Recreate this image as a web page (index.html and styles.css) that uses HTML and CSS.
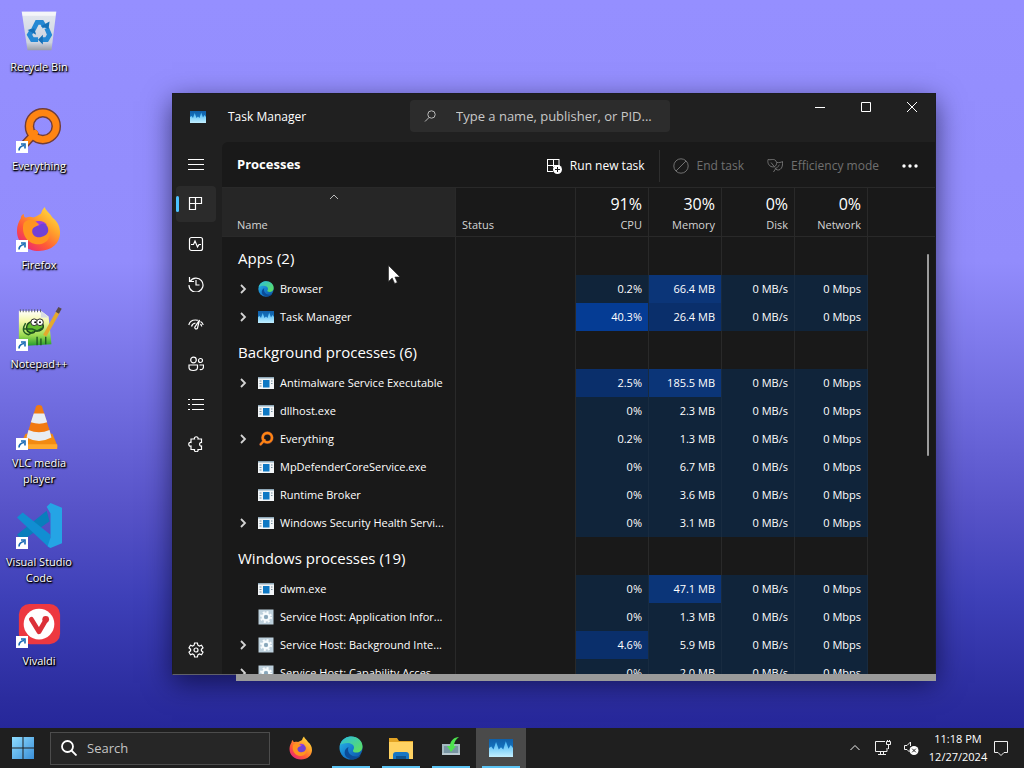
FILE: index.html
```html
<!DOCTYPE html>
<html lang="en">
<head>
<meta charset="utf-8">
<meta name="viewport" content="width=device-width, initial-scale=1">
<title>Task Manager</title>
<link rel="stylesheet" href="styles.css">
</head>
<body>
<svg class="sprite" aria-hidden="true">
  <defs>
    <linearGradient id="g-edge" x1="0" y1="0" x2="1" y2="1"><stop offset="0" stop-color="#2cc0e8"/><stop offset=".5" stop-color="#1680d0"/><stop offset="1" stop-color="#0c50a0"/></linearGradient>
    <linearGradient id="g-edge2" x1="0" y1="0" x2="1" y2="1"><stop offset="0" stop-color="#2bbde0"/><stop offset="1" stop-color="#62e254"/></linearGradient>
    <linearGradient id="g-fox" x1="1" y1="0" x2=".2" y2="1"><stop offset="0" stop-color="#fff14a"/><stop offset=".4" stop-color="#ffa42c"/><stop offset=".7" stop-color="#ff5a36"/><stop offset="1" stop-color="#e9217c"/></linearGradient>
    <linearGradient id="g-bin" x1="0" y1="0" x2="0" y2="1"><stop offset="0" stop-color="#e4e8f0"/><stop offset=".8" stop-color="#ccd3df"/><stop offset="1" stop-color="#9b9fa8"/></linearGradient>
    <linearGradient id="g-start" x1="0" y1="0" x2="1" y2="1"><stop offset="0" stop-color="#8edcff"/><stop offset="1" stop-color="#3a8fd8"/></linearGradient>
    <linearGradient id="g-tm" x1="0" y1="0" x2="0" y2="1"><stop offset="0" stop-color="#0f5fa8"/><stop offset="1" stop-color="#1c86d4"/></linearGradient>
    <linearGradient id="g-tm2" x1="0" y1="0" x2="0" y2="1"><stop offset="0" stop-color="#3fb4f4"/><stop offset="1" stop-color="#c4efff"/></linearGradient>
    <linearGradient id="g-note" x1="0" y1="0" x2="0" y2="1"><stop offset="0" stop-color="#fff"/><stop offset=".3" stop-color="#f4f8a8"/><stop offset=".7" stop-color="#9ada50"/><stop offset="1" stop-color="#1e9a2c"/></linearGradient>
  </defs>
  <symbol id="taskman" viewBox="0 0 16 14"><path fill="url(#g-tm)" d="M0 1h16v12H0z"/><path fill="url(#g-tm2)" d="M0 13V7l1.500-1L3 8l1.700-5L6.500 8 8 6.500 9.500 8l1.700-5.500L13 7.500 14.500 5 16 7v6z"/></symbol>
  <symbol id="edge" viewBox="0 0 24 24"><circle cx="12" cy="12" r="11.500" fill="url(#g-edge)"/><path fill="url(#g-edge2)" d="M1 9C3 3 8 .5 12.500.5 19 .5 23.500 5 23.500 10.500c0 4-3 6-6 6-2.500 0-4-.9-3.500-2.100.5-.8 1-1.500 1-2.800C15 8.500 11.500 7 8.500 7 5 7 2 8 1 9z"/><path fill="#0b4c98" d="M9.500 11c-1.800 5 2 9.500 7.500 9.500 2 0 4-.6 5-1.600-3 4.600-9 5.600-13 3C4 19.500 5 12.500 9.500 11z"/></symbol>
  <symbol id="firefox" viewBox="0 0 48 48"><path fill="url(#g-fox)" d="M30 1c1 4 6 7 8 11 5 4 8 9 8 16 0 11-9 19-22 19S1 38 1 26c0-6 2-10 4-13 0-2 1-4 3-5 0 3 1 4 3 4 2-1 5-1 7 0 3-1 6-3 8-4 1-3 2-5 4-7z"/><circle cx="24" cy="26" r="10" fill="#7141d6"/><path fill="#9b3fe0" d="M16 20c3-5 11-6 16-1-4-2-7 0-8 2z"/><path fill="#ff9420" d="M8 18c4-5 10-4 12-2l4 3c-2 3-6 2-7 6-1 6 5 9 10 7 5-1 7-4 7-9 4 8-1 17-11 17C12 40 5 29 8 18z"/></symbol>
  <symbol id="lens" viewBox="0 0 48 48"><path d="M19 28 8 40" stroke="#713d38" stroke-width="9" stroke-linecap="round"/><circle cx="28" cy="20" r="14" fill="none" stroke="#713d38" stroke-width="10"/><path d="M20 27 8 40" stroke="#ff8512" stroke-width="6" stroke-linecap="round"/><circle cx="28" cy="20" r="14" fill="none" stroke="#ff8512" stroke-width="7"/></symbol>
  <symbol id="exe" viewBox="0 0 16 14"><path fill="#f2f5f7" d="M0 1h16v12H0z"/><path fill="#8fa8b8" d="M0 1h16v1.500H0z"/><path fill="#0d78c4" d="M5 4h6.500v7.500H5z"/><path stroke="#77909f" d="M1.500 5h2M1.500 7.500h2M1.500 10h2M13 5h1.500M13 7.500h1.500"/></symbol>
  <symbol id="svc" viewBox="0 0 16 16"><path fill="#bdd0dc" d="M.5.5h15v15H.5z"/><circle cx="8" cy="8" r="5" fill="none" stroke="#f7fbfd" stroke-width="2" stroke-dasharray="2 1.930"/><circle cx="8" cy="8" r="3.300" fill="none" stroke="#f7fbfd" stroke-width="2.200"/><circle cx="8" cy="8" r="2" fill="#88a6ba"/></symbol>
  <symbol id="chev" viewBox="0 0 8 12"><path d="m2 2 4 4-4 4" fill="none" stroke="#d4d4d4" stroke-width="1.800"/></symbol>
  <symbol id="short" viewBox="0 0 12 12"><path fill="#fff" d="M0 0h12v12H0z"/><path d="M3 9.500C3 7 5 5 8 4.500M5 3h4v4.500" fill="none" stroke="#1768b4" stroke-width="1.600"/></symbol>
</svg>

<main class="desktop">
  <nav class="shortcuts" aria-label="Desktop">
    <button class="shortcut" type="button"><span class="shortcut-icon"><svg viewBox="0 0 48 48"><path fill="url(#g-bin)" d="M6 4h36l-5 40H12z"/><path fill="#f4f5f9" d="M6 4h36l-1 4H7z"/><g fill="none" stroke="#2488d4" stroke-width="5"><path d="m18 23 4-8h5l3 5"/><path d="m32 21 3 7-3 5h-5"/><path d="M23 33h-6l-3-5 3-5"/></g><path fill="#1570b8" d="m26 19 8 3 1-8zM28 28l-5 5 5 5zM12 23l7-2 2 7z"/></svg></span><span class="caption">Recycle Bin</span></button>
    <button class="shortcut" type="button"><span class="shortcut-icon"><svg><use href="#lens"/></svg><svg class="arrow"><use href="#short"/></svg></span><span class="caption">Everything</span></button>
    <button class="shortcut" type="button"><span class="shortcut-icon"><svg><use href="#firefox"/></svg><svg class="arrow"><use href="#short"/></svg></span><span class="caption">Firefox</span></button>
    <button class="shortcut" type="button"><span class="shortcut-icon"><svg viewBox="0 0 48 48"><path fill="url(#g-note)" d="M3 6h23l8 6 3 29-34 2z"/><path fill="#d8dce2" d="M26 6v7h8z"/><path d="M4 6h22" stroke="#555b66" stroke-width="3" stroke-dasharray="1 2"/><path fill="#64bd30" stroke="#18401a" stroke-width="1.500" d="M28 20c-7-6-17-3-17 4 0 5 7 7 9 3 5 1 10-2 8-7z"/><path d="M7 25h10l5 2 6-3M10 19c-3 5-4 10 3 12l5-3M22 42v-9M26 42v-7M31 41v-8" fill="none" stroke="#205c22" stroke-width="1.500"/><circle cx="19" cy="18" r="3.500" fill="#fff" stroke="#222"/><circle cx="25" cy="18" r="3.500" fill="#fff" stroke="#222"/><circle cx="20" cy="18" r="1"/><circle cx="25" cy="18" r="1"/><path d="m30 32 14-25" stroke="#e3a92e" stroke-width="4"/><path d="m43 8 3-5" stroke="#584949" stroke-width="4"/></svg><svg class="arrow"><use href="#short"/></svg></span><span class="caption">Notepad++</span></button>
    <button class="shortcut" type="button"><span class="shortcut-icon"><svg viewBox="0 0 48 48"><path fill="#f28a12" d="M10 31h28l5 12q1 4-3 4H7q-4 0-3-4z"/><path fill="#ffa92d" d="M4 42h39v5H4z"/><path fill="#f17a12" d="M21 2q3-2 6 0l10 32q-13 8-26 0z"/><path fill="#e8edf3" d="m18.500 10h11l3 9q-8 3-17 0zM13 27q11 5 22 0l2 8q-13 7-26 0z"/></svg><svg class="arrow"><use href="#short"/></svg></span><span class="caption">VLC media player</span></button>
    <button class="shortcut" type="button"><span class="shortcut-icon"><svg viewBox="0 0 48 48"><path fill="#087ebc" d="m1 33 31-25 3 11L7 39z"/><path fill="#118ed2" d="m1 15 6-5 29 23-1 14z"/><path fill="#25a4e5" d="m36 0 12 5v37l-12 5-3-2 3-9V11l-4-7z"/></svg><svg class="arrow"><use href="#short"/></svg></span><span class="caption">Visual Studio Code</span></button>
    <button class="shortcut" type="button"><span class="shortcut-icon"><svg viewBox="0 0 48 48"><rect x="3" y="2" width="43" height="42" rx="11" fill="#ed3840"/><circle cx="24" cy="23" r="16" fill="#fff"/><path d="m16 18 8 13 7-12" fill="none" stroke="#dc3038" stroke-width="5" stroke-linecap="round" stroke-linejoin="round"/><circle cx="31" cy="18" r="3.500" fill="#dc3038"/></svg><svg class="arrow"><use href="#short"/></svg></span><span class="caption">Vivaldi</span></button>
  </nav>

  <section class="window" aria-label="Task Manager">
    <header class="titlebar">
      <svg class="app-icon" aria-hidden="true"><use href="#taskman"/></svg>
      <h1 class="app-title">Task Manager</h1>
      <label class="find">
        <svg viewBox="0 0 12 12" aria-hidden="true"><circle cx="7.500" cy="4.500" r="3.700" fill="none" stroke="#bbb"/><path d="M5 7.500 1 11.500" stroke="#bbb"/></svg>
        <input type="text" aria-label="Search processes" placeholder="Type a name, publisher, or PID...">
      </label>
      <div class="caption-buttons">
        <button type="button" aria-label="Minimize"><svg viewBox="0 0 12 12"><path d="M1 6.500h10" stroke="#fff"/></svg></button>
        <button type="button" aria-label="Maximize"><svg viewBox="0 0 12 12"><path d="M1.500 1.500h9v9h-9z" fill="none" stroke="#fff"/></svg></button>
        <button type="button" aria-label="Close"><svg viewBox="0 0 12 12"><path d="m1 1 10 10M11 1 1 11" stroke="#fff"/></svg></button>
      </div>
    </header>
    <div class="window-body">
      <nav class="rail" aria-label="Pages">
        <button type="button" aria-label="Menu"><svg viewBox="0 0 16 16"><path d="M0 3.500h16M0 8.500h16M0 13.500h16"/></svg></button>
        <button class="current" type="button" aria-label="Processes"><svg viewBox="0 0 16 16"><path d="M1.500 1.500h6v12h-6zM1.500 7.500h12v-6h-6"/></svg></button>
        <button type="button" aria-label="Performance"><svg viewBox="0 0 16 16"><rect x="1.500" y="1.500" width="13" height="13" rx="2"/><path d="M3 8.500h2.500L7 5l2.500 6L11 8.500h2"/></svg></button>
        <button type="button" aria-label="App history"><svg viewBox="0 0 16 16"><path d="M1.500 1v4.500H6M2 5.500A7 7 0 1 1 1 9M8 4v5h3.500"/></svg></button>
        <button type="button" aria-label="Startup apps"><svg viewBox="0 0 16 16"><path d="M.8 9C1.500 6 4 4 7.500 4c1 0 1.500.1 2.300.4M12.500 5.500c1.500.8 2.400 2 2.700 3.500M3.500 10.500C4 8.500 5.500 7.200 7.500 7M12.500 8c.6.700 1 1.500 1.200 2.500M11.500 4 7 10.800a1.400 1.400 0 1 0 2.500 1.200z"/></svg></button>
        <button type="button" aria-label="Users"><svg viewBox="0 0 16 16"><circle cx="5.500" cy="4" r="2.800"/><circle cx="12.500" cy="4.500" r="2"/><path d="M1 9h8.500v2.500c0 4-8.500 4-8.500 0zM11.500 9h4v1.500c0 2.500-1.500 3.500-3.800 3"/></svg></button>
        <button type="button" aria-label="Details"><svg viewBox="0 0 16 16"><path d="M0 3.500h2M4 3.500h12M0 8.500h2M4 8.500h12M0 13.500h2M4 13.500h12"/></svg></button>
        <button type="button" aria-label="Services"><svg viewBox="0 0 16 16"><path d="M5.500 3h1C5.500 0 11 0 10 3h3.500v3.500c-2.500-.5-2.500 4 0 3.500v3.500H10c1 3-4.500 3-3.500 0H3V10C0 11 0 5.500 3 6.500V3z"/></svg></button>
        <button class="settings" type="button" aria-label="Settings"><svg viewBox="0 0 16 16"><path d="M6.600 1h2.800l.5 2.200 1.500.8 2.100-.7 1.500 2.500L13.400 7.300v1.400l1.600 1.500-1.500 2.500-2.100-.7-1.500.8-.5 2.200H6.600l-.5-2.200-1.500-.8-2.100.7L1 10.200l1.600-1.500V7.300L1 5.800l1.500-2.500 2.100.7 1.500-.8z"/><circle cx="8" cy="8" r="2"/></svg></button>
      </nav>
      <div class="page">
        <div class="toolbar">
          <h2>Processes</h2>
          <button type="button"><svg viewBox="0 0 16 16"><path d="M1 1.500h12M1.500 1v13M1.500 7.500h12M7.500 1v8M13 1v7M1 13.500h6" fill="none" stroke="#fff"/><circle cx="11.500" cy="11.500" r="4.500" fill="#fff"/><path d="M9 11.500h5M11.500 9v5" stroke="#191919"/></svg>Run new task</button>
          <span class="divider"></span>
          <button type="button" disabled><svg viewBox="0 0 16 16"><g fill="none" stroke="currentColor"><circle cx="8" cy="8" r="7.200"/><path d="m3 13 10-10"/></g></svg>End task</button>
          <button type="button" disabled><svg viewBox="0 0 16 16"><g fill="none" stroke="currentColor"><path d="M1 1.500c2.500 1 6-1.500 8 1.500 2 4-1.500 7-5 5.500C1 7 .5 4 1 1.500zM4 4.500l4 5"/><path d="M10 4.500c2 .2 4 0 5.500-1 .2 3 0 6.500-2.500 8-2 1-4 .5-5-1.500M12.500 7c-2.500 2.500-4.500 4-6 7"/></g></svg>Efficiency mode</button>
          <button class="more" type="button" aria-label="More options"><svg viewBox="0 0 16 16"><g fill="#fff"><circle cx="2" cy="8" r="1.700"/><circle cx="8" cy="8" r="1.700"/><circle cx="14" cy="8" r="1.700"/></g></svg></button>
        </div>
        <div class="grid">
          <table>
            <colgroup><col class="c-name"><col class="c-status"><col class="c-num"><col class="c-num"><col class="c-num"><col class="c-num"><col></colgroup>
            <thead>
              <tr>
                <th class="sorted" scope="col"><svg class="sort" viewBox="0 0 10 6" aria-hidden="true"><path d="m1 5 4-4 4 4" fill="none" stroke="#bbb"/></svg>Name</th>
                <th scope="col">Status</th>
                <th class="n" scope="col"><span class="total">91%</span>CPU</th>
                <th class="n" scope="col"><span class="total">30%</span>Memory</th>
                <th class="n" scope="col"><span class="total">0%</span>Disk</th>
                <th class="n" scope="col"><span class="total">0%</span>Network</th>
                <td></td>
              </tr>
            </thead>
            <tbody>
              <tr class="group"><th scope="rowgroup">Apps (2)</th><td></td><td></td><td></td><td></td><td></td><td></td></tr>
              <tr><td><div class="proc"><button type="button" aria-label="Expand"><svg><use href="#chev"/></svg></button><svg class="picto"><use href="#edge"/></svg>Browser</div></td><td></td><td class="n">0.2%</td><td class="n hot">66.4 MB</td><td class="n">0 MB/s</td><td class="n">0 Mbps</td><td></td></tr>
              <tr><td><div class="proc"><button type="button" aria-label="Expand"><svg><use href="#chev"/></svg></button><svg class="picto"><use href="#taskman"/></svg>Task Manager</div></td><td></td><td class="n peak">40.3%</td><td class="n warm">26.4 MB</td><td class="n">0 MB/s</td><td class="n">0 Mbps</td><td></td></tr>
            </tbody>
            <tbody>
              <tr class="group"><th scope="rowgroup">Background processes (6)</th><td></td><td></td><td></td><td></td><td></td><td></td></tr>
              <tr><td><div class="proc"><button type="button" aria-label="Expand"><svg><use href="#chev"/></svg></button><svg class="picto"><use href="#exe"/></svg>Antimalware Service Executable</div></td><td></td><td class="n warm">2.5%</td><td class="n hot">185.5 MB</td><td class="n">0 MB/s</td><td class="n">0 Mbps</td><td></td></tr>
              <tr><td><div class="proc leaf"><svg class="picto"><use href="#exe"/></svg>dllhost.exe</div></td><td></td><td class="n">0%</td><td class="n">2.3 MB</td><td class="n">0 MB/s</td><td class="n">0 Mbps</td><td></td></tr>
              <tr><td><div class="proc"><button type="button" aria-label="Expand"><svg><use href="#chev"/></svg></button><svg class="picto"><use href="#lens"/></svg>Everything</div></td><td></td><td class="n">0.2%</td><td class="n">1.3 MB</td><td class="n">0 MB/s</td><td class="n">0 Mbps</td><td></td></tr>
              <tr><td><div class="proc leaf"><svg class="picto"><use href="#exe"/></svg>MpDefenderCoreService.exe</div></td><td></td><td class="n">0%</td><td class="n">6.7 MB</td><td class="n">0 MB/s</td><td class="n">0 Mbps</td><td></td></tr>
              <tr><td><div class="proc leaf"><svg class="picto"><use href="#exe"/></svg>Runtime Broker</div></td><td></td><td class="n">0%</td><td class="n">3.6 MB</td><td class="n">0 MB/s</td><td class="n">0 Mbps</td><td></td></tr>
              <tr><td><div class="proc"><button type="button" aria-label="Expand"><svg><use href="#chev"/></svg></button><svg class="picto"><use href="#exe"/></svg>Windows Security Health Servi...</div></td><td></td><td class="n">0%</td><td class="n">3.1 MB</td><td class="n">0 MB/s</td><td class="n">0 Mbps</td><td></td></tr>
            </tbody>
            <tbody>
              <tr class="group"><th scope="rowgroup">Windows processes (19)</th><td></td><td></td><td></td><td></td><td></td><td></td></tr>
              <tr><td><div class="proc leaf"><svg class="picto"><use href="#exe"/></svg>dwm.exe</div></td><td></td><td class="n">0%</td><td class="n hot">47.1 MB</td><td class="n">0 MB/s</td><td class="n">0 Mbps</td><td></td></tr>
              <tr><td><div class="proc leaf"><svg class="picto"><use href="#svc"/></svg>Service Host: Application Infor...</div></td><td></td><td class="n">0%</td><td class="n">1.3 MB</td><td class="n">0 MB/s</td><td class="n">0 Mbps</td><td></td></tr>
              <tr><td><div class="proc"><button type="button" aria-label="Expand"><svg><use href="#chev"/></svg></button><svg class="picto"><use href="#svc"/></svg>Service Host: Background Inte...</div></td><td></td><td class="n warm">4.6%</td><td class="n">5.9 MB</td><td class="n">0 MB/s</td><td class="n">0 Mbps</td><td></td></tr>
              <tr><td><div class="proc"><button type="button" aria-label="Expand"><svg><use href="#chev"/></svg></button><svg class="picto"><use href="#svc"/></svg>Service Host: Capability Acces...</div></td><td></td><td class="n">0%</td><td class="n">2.0 MB</td><td class="n">0 MB/s</td><td class="n">0 Mbps</td><td></td></tr>
            </tbody>
          </table>
          <span class="v-thumb"></span>
        </div>
      </div>
    </div>
    <span class="h-thumb"></span>
  </section>
  <svg class="pointer" viewBox="0 0 12 19" aria-hidden="true"><path d="M.5.500v16l3.700-3.500L6.700 18.500l2.600-1.100L6.900 12H12z" fill="#fff" stroke="#222" stroke-width=".6"/></svg>
</main>

<footer class="taskbar">
  <button class="start" type="button" aria-label="Start"><svg viewBox="0 0 22 22"><path fill="url(#g-start)" d="M0 0h10.500v10.500H0zM11.500 0H22v10.500H11.500zM0 11.500h10.500V22H0zM11.500 11.500H22V22H11.500z"/></svg></button>
  <label class="search"><svg viewBox="0 0 16 16" aria-hidden="true"><circle cx="6.500" cy="6.500" r="5.500" fill="none" stroke="#fff" stroke-width="1.800"/><path d="m10.500 10.500 5 5" stroke="#fff" stroke-width="1.800"/></svg><input type="text" aria-label="Search" placeholder="Search"></label>
  <div class="apps">
    <button type="button" aria-label="Firefox"><svg><use href="#firefox"/></svg></button>
    <button class="open" type="button" aria-label="Edge"><svg><use href="#edge"/></svg></button>
    <button class="open" type="button" aria-label="File Explorer"><svg viewBox="0 0 24 24"><path fill="#e2a324" d="M0 2h8l2 3h14v5H0z"/><path fill="#ffd262" d="M0 6h24v17H0z"/><path fill="#1976c4" d="M4 23v-4q0-3 3-3h10q3 0 3 3v4z"/><path fill="#0f5390" d="M7 20h10v3H7z"/></svg></button>
    <button class="open" type="button" aria-label="Installer"><svg viewBox="0 0 24 24"><path fill="#a3b8c0" d="M3 8h18v11H3z"/><path fill="#7894a2" d="M5 10h14v7H5z"/><path fill="#b9c9d0" d="M3 17h18v2H3z"/><path fill="#4de34e" d="M20 1c-5 0-9 4-9 9H8l4 6 5-6h-2c0-4 2-7 5-9z"/></svg></button>
    <button class="open active" type="button" aria-label="Task Manager"><svg><use href="#taskman"/></svg></button>
  </div>
  <div class="tray">
    <button type="button" aria-label="Hidden icons"><svg viewBox="0 0 16 16"><path d="m3.500 10 4.500-4.500 4.500 4.500"/></svg></button>
    <button type="button" aria-label="Network"><svg viewBox="0 0 16 16"><path d="M10 1.500H.5v10H12V8M3 14.500h8M5.500 11.500v3M8.500 11.500v3M11.500 1.500h4v3h-4zM13.500 4.500V9M12.500 0v1.500M14.500 0v1.500"/></svg></button>
    <button type="button" aria-label="Volume"><svg viewBox="0 0 16 16"><path d="M6.500 12 4 9.500H1.500v-4H4L7.500 2v4"/><circle cx="11" cy="10.500" r="4.500" fill="#fff" stroke="none"/><path d="m9.200 8.700 3.600 3.600M12.800 8.700l-3.600 3.600" class="mute"/></svg></button>
    <time class="clock" datetime="2024-12-27T23:18">11:18 PM<br>12/27/2024</time>
    <button type="button" aria-label="Notifications"><svg viewBox="0 0 16 16"><path d="M1.500 1.500h13v11H11l-3 3-3-3H1.500z"/></svg></button>
  </div>
</footer>
</body>
</html>
```
FILE: styles.css
```css
* { box-sizing: border-box; }

body {
  margin: 0;
  height: 100vh;
  display: flex;
  flex-direction: column;
  overflow: hidden;
  font: 11px/16px "Open Sans", "Noto Sans", sans-serif;
  color: #fff;
  background: #22228a;
}

button, input { font: inherit; color: inherit; border: 0; padding: 0; background: none; }
input:focus { outline: none; }
svg { display: block; flex: none; }
h1, h2 { margin: 0; font-size: 12px; font-weight: 400; }

.sprite { position: absolute; width: 0; height: 0; }

/* Desktop */
.desktop {
  flex: 1;
  min-height: 0;
  position: relative;
  background: linear-gradient(#958fff 0%, #928cfc 36%, #716de0 55%, #5753c8 70%, #3e40b8 82%, #2b2c9e 96%, #26279a 100%);
}
.shortcuts { width: 78px; padding-top: 7px; }
.shortcut {
  display: flex;
  flex-direction: column;
  align-items: center;
  width: 100%;
  height: 99px;
  gap: 4px;
}
.shortcut-icon { position: relative; flex: none; }
.shortcut-icon svg { width: 48px; height: 48px; padding: 1px; }
.shortcut-icon .arrow { position: absolute; left: 0; bottom: 0; width: 14px; height: 14px; }
.caption { text-shadow: 1px 1px 2px #000, 0 1px 2px #000, 1px 1px 1px #000; }
.pointer { position: absolute; left: 388px; top: 265px; width: 12px; height: 19px; }

/* Window */
.window {
  position: absolute;
  inset: 93px 88px 53px 172px;
  display: flex;
  flex-direction: column;
  background: #202020;
  border: 1px solid #1c1c20;
  border-bottom-color: #60606a;
  box-shadow: 0 8px 26px rgba(0, 0, 30, .6);
}
.titlebar { display: flex; align-items: flex-start; height: 48px; flex: none; padding-left: 17px; }
.app-icon { width: 16px; height: 16px; margin-top: 15px; }
.app-title { width: 204px; padding: 15px 0 0 22px; }
.find {
  display: flex;
  align-items: center;
  width: 260px;
  height: 32px;
  margin-top: 6px;
  padding-left: 14px;
  gap: 20px;
  background: #2c2c2c;
  border-radius: 4px;
}
.find svg { width: 12px; height: 12px; }
.find input { flex: 1; min-width: 0; font-size: 13px; }
.find input::placeholder { color: #c8c8c8; opacity: 1; }
.caption-buttons { display: flex; margin-left: auto; }
.caption-buttons button { width: 46px; height: 26px; display: grid; place-items: center; }
.caption-buttons svg { width: 12px; height: 12px; }

.window-body { flex: 1; min-height: 0; display: flex; }
.rail { width: 49px; padding: 4px 6px 6px 3px; display: flex; flex-direction: column; gap: 4px; }
.rail button { height: 36px; display: grid; place-items: center; border-radius: 4px; flex: none; }
.rail svg { width: 16px; height: 16px; fill: none; stroke: #fff; stroke-width: 1.2; }
.rail .current { background: #2b2b2b; position: relative; }
.rail .current::before {
  content: "";
  position: absolute;
  left: 0;
  top: 10px;
  width: 3px;
  height: 16px;
  border-radius: 2px;
  background: #4cc2ff;
}
.rail .settings { margin-top: auto; }

.page { flex: 1; min-width: 0; display: flex; flex-direction: column; background: #191919; border-top-left-radius: 6px; }
.toolbar { display: flex; align-items: center; height: 45px; flex: none; padding: 2px 17px 0 15px; font-size: 12px; }
.toolbar h2 { flex: 1; padding-bottom: 4px; font-size: 13px; font-weight: 700; }
.toolbar button { display: flex; align-items: center; gap: 8px; margin-left: 23px; white-space: nowrap; }
.toolbar button:disabled { color: #707070; }
.toolbar svg { width: 16px; height: 16px; }
.toolbar .divider { width: 1px; height: 32px; margin-left: 14px; background: #2e2e2e; }
.toolbar .divider + button { margin-left: 13px; }

/* Process table */
.grid { flex: 1; min-height: 0; overflow: hidden; position: relative; }
table { width: 100%; border-collapse: separate; border-spacing: 0; table-layout: fixed; }
.c-name { width: 234px; }
.c-status { width: 120px; }
.c-num { width: 73px; }
th { font-weight: 400; text-align: left; }
th, td { padding: 0 6px; border-right: 1px solid #292929; white-space: nowrap; }
tr > :last-child { border-right: 0; }
thead th, thead td { height: 50px; vertical-align: bottom; padding-bottom: 3px; border-top: 1px solid #292929; border-bottom: 1px solid #292929; color: #d4d4d4; }
thead .sorted { background: #262626; padding: 0 24px 3px 15px; }
.sort { width: 10px; height: 6px; margin: 0 auto 17px; }
.n { text-align: right; }
.total { display: block; font-size: 16px; line-height: 20px; margin-bottom: 3px; color: #fff; }
tbody td { height: 28px; }
tbody td:first-child { padding: 0 0 0 15px; }
.group th { height: 38px; padding: 4px 0 0 16px; font-size: 15px; }
.proc { display: flex; align-items: center; }
.proc button { flex: none; width: 12px; height: 20px; margin-right: 9px; display: grid; place-items: center; }
.proc button svg { width: 8px; height: 12px; }
.leaf { padding-left: 21px; }
.picto { width: 16px; height: 16px; margin-right: 6px; }
tbody .n { background: #10243a; border-right-color: #182b40; }
tbody .warm { background: #0a2f6b; }
tbody .hot { background: #0b3578; }
tbody .peak { background: #053c94; }
.v-thumb { position: absolute; right: 6px; top: 67px; width: 2px; height: 202px; background: #9c9c9c; border-radius: 1px; }
.h-thumb { position: absolute; left: 63px; right: -1px; bottom: -7px; height: 7px; background: #9a9a9a; }

/* Taskbar */
.taskbar { display: flex; align-items: center; height: 40px; flex: none; background: #1f1f1f; }
.start { width: 50px; height: 40px; padding-left: 12px; }
.start svg { width: 22px; height: 22px; }
.search { display: flex; align-items: center; gap: 10px; width: 220px; height: 33px; padding: 0 10px; background: #262626; border: 1px solid #4c4c4c; }
.search svg { width: 16px; height: 16px; }
.search input { flex: 1; min-width: 0; font-size: 13px; }
.search input::placeholder { color: #c4c4c4; opacity: 1; }
.apps { display: flex; padding-left: 6px; }
.apps button { width: 50px; height: 40px; display: grid; place-items: center; position: relative; }
.apps svg { width: 24px; height: 24px; }
.apps .active { background: #4a4a4a; }
.apps .open::after { content: ""; position: absolute; left: 6px; right: 6px; bottom: 0; height: 2px; background: #5cc4f4; }
.tray { display: flex; align-items: center; margin-left: auto; padding-right: 13px; }
.tray button { width: 28px; height: 40px; display: grid; place-items: center; }
.tray svg { width: 16px; height: 16px; fill: none; stroke: #f0f0f0; }
.tray .mute { stroke: #1f1f1f; }
.clock { width: 66px; text-align: center; line-height: 18px; }
.clock + button { width: 20px; }
```
